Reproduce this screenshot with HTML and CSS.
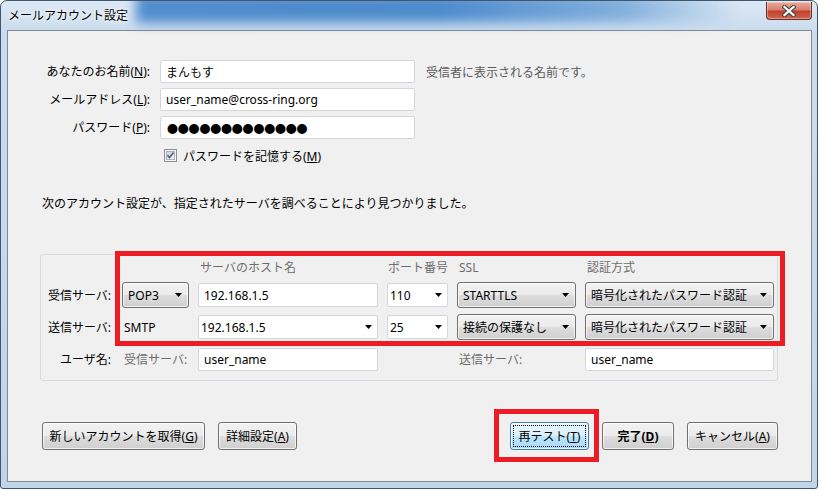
FILE: index.html
```html
<!DOCTYPE html>
<html lang="ja">

<head>
    <meta charset="UTF-8">
    <title>メールアカウント設定</title>
    <link rel="stylesheet" href="styles.css">
</head>

<body>
    <div class="window">
        <div class="titlebar">
            <div class="glass-blur"></div>
            <span class="title">メールアカウント設定</span>
            <div class="close-btn">
                <svg width="14" height="12" viewBox="0 0 14 12">
                    <path d="M2.5 2l9 8M11.5 2l-9 8" stroke="#4a4a4a" stroke-width="4.4" stroke-linecap="square" fill="none"/>
                    <path d="M2.5 2l9 8M11.5 2l-9 8" stroke="#fff" stroke-width="2.2" stroke-linecap="square" fill="none"/>
                </svg>
            </div>
        </div>

        <div class="client">
            <div class="identity">
                <label class="field-label">あなたのお名前(<u>N</u>):</label>
                <input class="textbox" type="text" value="まんもす">
                <span class="hint">受信者に表示される名前です。</span>

                <label class="field-label">メールアドレス(<u>L</u>):</label>
                <input class="textbox" type="text" value="user_name@cross-ring.org">
                <span></span>

                <label class="field-label">パスワード(<u>P</u>):</label>
                <div class="textbox password">●●●●●●●●●●●●●</div>
                <span></span>

                <div class="remember">
                    <svg class="checkbox" width="13" height="13" viewBox="0 0 13 13">
                        <defs>
                            <linearGradient id="cbg" x1="0" y1="0" x2="1" y2="1">
                                <stop offset="0" stop-color="#cbcfd5"/>
                                <stop offset="1" stop-color="#f7f7f7"/>
                            </linearGradient>
                        </defs>
                        <rect x="0.5" y="0.5" width="12" height="12" fill="#f4f4f4" stroke="#8e8f8f"/>
                        <rect x="2.5" y="2.5" width="8" height="8" fill="url(#cbg)" stroke="#aeb3b9"/>
                        <path d="M3.5 6.2l2 2.3 4-5" stroke="#4a5f8a" stroke-width="1.6" fill="none"/>
                    </svg>
                    <span>パスワードを記憶する(<u>M</u>)</span>
                </div>
            </div>

            <p class="found-msg">次のアカウント設定が、指定されたサーバを調べることにより見つかりました。</p>

            <div class="server-box">
                <div class="annotation server-annotation"></div>

                <span></span>
                <span></span>
                <span class="col-head">サーバのホスト名</span>
                <span class="col-head port-head">ポート番号</span>
                <span class="col-head">SSL</span>
                <span class="col-head">認証方式</span>

                <span class="row-label">受信サーバ:</span>
                <div class="dropdown"><span>POP3</span><svg class="arrow" width="7" height="4" viewBox="0 0 7 4"><path d="M0 0h7L3.5 4z"/></svg></div>
                <input class="textbox host" type="text" value="192.168.1.5">
                <div class="combo"><span>110</span><svg class="arrow" width="7" height="4" viewBox="0 0 7 4"><path d="M0 0h7L3.5 4z"/></svg></div>
                <div class="dropdown"><span>STARTTLS</span><svg class="arrow" width="7" height="4" viewBox="0 0 7 4"><path d="M0 0h7L3.5 4z"/></svg></div>
                <div class="dropdown"><span>暗号化されたパスワード認証</span><svg class="arrow" width="7" height="4" viewBox="0 0 7 4"><path d="M0 0h7L3.5 4z"/></svg></div>

                <span class="row-label">送信サーバ:</span>
                <span class="plain">SMTP</span>
                <div class="combo"><span>192.168.1.5</span><svg class="arrow" width="7" height="4" viewBox="0 0 7 4"><path d="M0 0h7L3.5 4z"/></svg></div>
                <div class="combo"><span>25</span><svg class="arrow" width="7" height="4" viewBox="0 0 7 4"><path d="M0 0h7L3.5 4z"/></svg></div>
                <div class="dropdown"><span>接続の保護なし</span><svg class="arrow" width="7" height="4" viewBox="0 0 7 4"><path d="M0 0h7L3.5 4z"/></svg></div>
                <div class="dropdown"><span>暗号化されたパスワード認証</span><svg class="arrow" width="7" height="4" viewBox="0 0 7 4"><path d="M0 0h7L3.5 4z"/></svg></div>

                <span class="row-label">ユーザ名:</span>
                <span class="plain muted">受信サーバ:</span>
                <input class="textbox small" type="text" value="user_name">
                <span></span>
                <span class="plain muted">送信サーバ:</span>
                <input class="textbox small" type="text" value="user_name">
            </div>

            <div class="actions">
                <div class="btn-group">
                    <button class="btn btn-new">新しいアカウントを取得(<u>G</u>)</button>
                    <button class="btn btn-advanced">詳細設定(<u>A</u>)</button>
                </div>
                <div class="btn-group">
                    <span class="retest-wrap">
                        <div class="annotation retest-annotation"></div>
                        <button class="btn btn-retest">再テスト(<u>T</u>)</button>
                    </span>
                    <button class="btn btn-done">完了(<u>D</u>)</button>
                    <button class="btn btn-cancel">キャンセル(<u>A</u>)</button>
                </div>
            </div>
        </div>
    </div>
</body>

</html>
```

FILE: styles.css
```css
* {
    box-sizing: border-box;
}

body {
    margin: 0;
    background: #fff;
    font-family: "Noto Sans", "Noto Sans CJK JP", sans-serif;
    font-size: 12px;
    color: #000;
}

.window {
    width: 818px;
    height: 489px;
    display: flex;
    flex-direction: column;
    background: linear-gradient(180deg, #dde9f5 0, #cbdcee 30px, #c2d4e8 100%);
    border: 1px solid #43556b;
    border-radius: 7px 7px 3px 3px;
    overflow: hidden;
}

.titlebar {
    position: relative;
    height: 29px;
    display: flex;
    align-items: center;
    padding-left: 7px;
}

.glass-blur {
    position: absolute;
    left: 135px;
    top: -8px;
    width: 605px;
    height: 30px;
    background: linear-gradient(90deg, #4283c9 0, #3f82c9 50%, #78a9db 80%, rgba(170, 200, 235, 0) 100%);
    filter: blur(6px);
    opacity: 0.9;
}

.title {
    position: relative;
    text-shadow: 0 0 6px #fff, 0 0 3px #fff;
    line-height: 16px;
}

.close-btn {
    position: absolute;
    right: 5px;
    top: 1px;
    width: 46px;
    height: 18px;
    border: 1px solid #6e2c27;
    border-top: none;
    border-radius: 0 0 4px 4px;
    background: linear-gradient(180deg, #e9a99c 0, #d7816f 45%, #c0412c 55%, #d1654b 100%);
    box-shadow: inset 0 0 0 1px rgba(255, 255, 255, 0.35);
    display: flex;
    align-items: center;
    justify-content: center;
}

.client {
    margin-left: 6px;
    width: 805px;
    height: 452px;
    background: #f0f0f0;
    border: 1px solid #7d8a98;
}

/* upper form */
.identity {
    display: grid;
    grid-template-columns: 142px 255px 1fr;
    grid-template-rows: repeat(4, 23px);
    column-gap: 10px;
    row-gap: 5px;
    align-items: center;
    padding-top: 29px;
}

.field-label {
    text-align: right;
    line-height: 16px;
}

.textbox {
    height: 23px;
    width: 100%;
    padding: 0 5px;
    border: 1px solid #d3d7db;
    border-radius: 2px;
    background: #fff;
    font: inherit;
    color: #000;
    outline: none;
}

.password {
    display: flex;
    align-items: center;
    padding-left: 6px;
    font-family: "Noto Sans CJK JP", sans-serif;
    font-size: 11px;
    letter-spacing: -0.2px;
}

.hint {
    margin-left: 1px;
    color: #5a5a5a;
}

.remember {
    grid-column: 2 / 4;
    display: flex;
    align-items: center;
    gap: 6px;
    padding-left: 4px;
}

.found-msg {
    margin: 29px 0 0;
    padding-left: 34px;
    line-height: 16px;
}

/* server settings */
.server-box {
    position: relative;
    margin: 42px 0 0 32px;
    width: 738px;
    display: grid;
    grid-template-columns: 72px 67px 180px 61px 119px 189px;
    grid-template-rows: 16px 26px 26px 26px;
    column-gap: 9px;
    row-gap: 6px;
    align-items: center;
    padding: 5px 3px 8px 0;
    border: 1px solid #d5dbe1;
    border-radius: 3px;
}

.col-head {
    color: #6d6d6d;
    padding-left: 2px;
    line-height: 16px;
}

.port-head {
    padding-left: 1px;
}

.row-label {
    text-align: right;
    padding-right: 2px;
}

.plain {
    padding-left: 2px;
}

.muted {
    color: #6d6d6d;
}

.textbox.host {
    height: 24px;
    padding-left: 5px;
}

.textbox.small {
    height: 23px;
    padding-left: 5px;
}

.dropdown,
.combo {
    display: flex;
    align-items: center;
    justify-content: space-between;
    white-space: nowrap;
}

.dropdown {
    height: 26px;
    padding: 0 6px 0 5px;
    border: 1px solid #707070;
    border-radius: 3px;
    background: linear-gradient(180deg, #f2f2f2 0, #ebebeb 48%, #dddddd 52%, #cfcfcf 100%);
    box-shadow: inset 0 0 0 1px rgba(255, 255, 255, 0.7);
}

.combo {
    height: 24px;
    padding: 0 5px 0 2px;
    border: 1px solid #d3d7db;
    border-radius: 2px;
    background: #fff;
}

.arrow {
    flex: none;
}

.annotation {
    position: absolute;
    border: 5px solid #ed1c24;
    pointer-events: none;
}

.server-annotation {
    left: 74px;
    top: -4px;
    width: 670px;
    height: 95px;
}

/* bottom buttons */
.actions {
    margin-top: 41px;
    padding: 0 33px 0 34px;
    display: flex;
    justify-content: space-between;
}

.btn-group {
    display: flex;
    gap: 13px;
}

.btn {
    height: 28px;
    padding: 0;
    border: 1px solid #707070;
    border-radius: 3px;
    background: linear-gradient(180deg, #f2f2f2 0, #ebebeb 48%, #dddddd 52%, #cfcfcf 100%);
    box-shadow: inset 0 0 0 1px rgba(255, 255, 255, 0.7);
    font: inherit;
    color: #000;
}

.btn-new {
    width: 163px;
}

.btn-advanced {
    width: 79px;
}

.retest-wrap {
    position: relative;
    display: flex;
}

.retest-annotation {
    left: -16px;
    top: -13px;
    width: 105px;
    height: 53px;
}

.btn-retest {
    width: 79px;
    border-color: #3c7fb1;
    background: linear-gradient(180deg, #eaf6fd 0, #d9f0fc 48%, #bee6fd 52%, #a7d9f5 100%);
    outline: 1px dotted #000;
    outline-offset: -4px;
}

.btn-done {
    width: 72px;
    font-weight: bold;
}

.btn-cancel {
    width: 91px;
}
```
